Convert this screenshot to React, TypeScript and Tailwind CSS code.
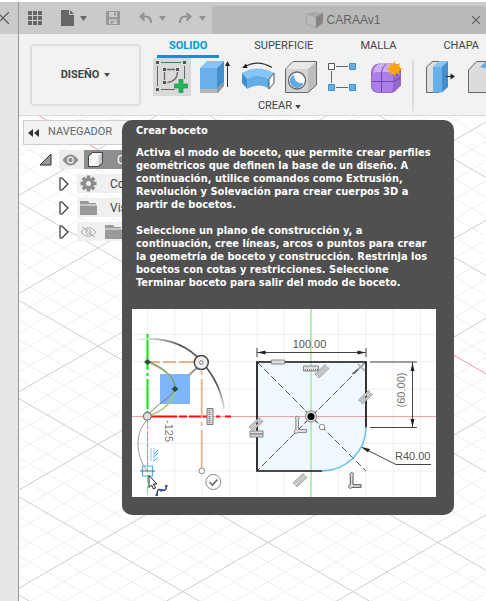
import React from 'react';
import { X } from 'lucide-react';

const SLOPE = 0.5776;
const STEP = 19.64;

const Caret: React.FC<{ className?: string }> = ({ className = '' }) => (
  <svg width="7" height="5" viewBox="0 0 7 5" className={className} fill="currentColor">
    <path d="M0 0h7L3.5 5z" />
  </svg>
);

/* Isometric floor grid, every fifth line is a major one */
const FloorGrid: React.FC = () => {
  const lines = Array.from({ length: 160 }, (_, i) => i - 80);
  const stroke = (k: number) => (k % 5 === 0 ? '#cdcdcd' : '#efefef');
  return (
    <svg className="absolute inset-0 w-full h-full" aria-hidden="true">
      {[false, true].map((major) =>
        lines
          .filter((k) => (k % 5 === 0) === major)
          .map((k) => (
            <g key={k}>
              <line x1="0" y1={380.9 + k * STEP} x2="2000" y2={380.9 + k * STEP + 2000 * SLOPE} stroke={k === -20 ? '#f49a9a' : stroke(k)} />
              <line x1="0" y1={472.1 + k * STEP} x2="2000" y2={472.1 + k * STEP - 2000 * SLOPE} stroke={stroke(k)} />
            </g>
          ))
      )}
    </svg>
  );
};

const SketchIcon = () => (
  <svg width="38" height="38" viewBox="0 0 38 38">
    <path d="M8 4.500h20M4.500 8v20M8 31.500h14M31.500 8v13" stroke="#666" fill="none" />
    <path d="M14 11.500h8M11.500 14v8M24.500 14c0 6-4 10-10 10.500" stroke="#666" strokeWidth="1.300" fill="none" />
    <path d="M3 3h3v3H3zM30 3h3v3h-3zM3 30h3v3H3zM10 10h3v3h-3zM23 10h3v3h-3zM10 23h3v3h-3z" fill="#555" />
    <path d="M26 21.500h4v4.500h4.500v4H30v4.500h-4V30h-4.500v-4H26z" fill="#22b455" stroke="#16994a" strokeWidth=".7" />
  </svg>
);

const ExtrudeIcon = () => (
  <svg width="38" height="38" viewBox="0 0 38 38">
    <path d="M4 31h17l7-7v4l-6 7H4z" fill="#999" />
    <path d="M4 31h17v4H4z" fill="#b5b5b5" />
    <path d="M4 10h17v21H4z" fill="#68b0e8" />
    <path d="M4 10l7-7h17l-7 7z" fill="#85c6fa" />
    <path d="M21 10l7-7v21l-7 7z" fill="#4490cc" />
    <path d="M31.500 29V6" stroke="#333" />
    <path d="M29 8l2.500-5L34 8z" fill="#222" />
  </svg>
);

const RevolveIcon = () => (
  <svg width="38" height="38" viewBox="0 0 38 38">
    <path d="M6 8.500C14 4 24 4 33 9.500" stroke="#333" strokeWidth="1.200" fill="none" />
    <path d="M3 10l4-4.500 1.500 4.500z" fill="#222" />
    <path d="M3 15c10-6 22-6 32 0l-5 6c-7-4-15-4-21.500 0z" fill="#85c6fa" />
    <path d="M8.500 21c6.500-4 14.500-4 21.500 0v10c-7-5-15-4-21.500 0z" fill="#62ade6" />
    <path d="M3 15l5.500 6v10L3 25z" fill="#3f8ecb" />
    <path d="M30 21l5-6v10l-5 6z" fill="#fff" stroke="#555" />
  </svg>
);

const HoleIcon = () => (
  <svg width="38" height="38" viewBox="0 0 38 38">
    <path d="M3.500 11L11 3.500h23.500L26 11z" fill="#e8e8e8" />
    <path d="M26 11l8.500-7.500V27L26 34.500z" fill="#bdbdbd" />
    <path d="M3.500 11H26v23.500H3.500z" fill="#d4d4d4" />
    <path d="M3.500 11L11 3.500h23.500V27L26 34.500H3.500z" fill="none" stroke="#666" />
    <circle cx="15" cy="22.500" r="8.500" fill="#fff" stroke="#666" strokeWidth="1.300" />
    <path d="M12 16.500c0 6 3 9 9.500 8.500A7 7 0 1 1 12 16.500z" fill="#5fabe5" />
  </svg>
);

const PatternIcon = () => (
  <svg width="38" height="38" viewBox="0 0 38 38">
    <path d="M11 8.500h12M6.500 13v12M11 29.500h12" stroke="#666" />
    <path d="M3.500 5.500h6v6h-6z" fill="#fff" stroke="#555" />
    <path d="M24.500 5.500h6v6h-6zM3.500 26.500h6v6h-6zM24.500 26.500h6v6h-6z" fill="#62b0ea" stroke="#4591cb" />
  </svg>
);

const FormIcon = () => (
  <svg width="38" height="38" viewBox="0 0 38 38">
    <path d="M10 5.500h16q6 1 7 7v15l-6 6q-2 1.500-5 1.500H10q-7-1-7-7V14q1-7 7-8.500z" fill="#9668ce" />
    <path d="M5 14q1-6 6-8h13q4 1 4 5l-3 5H5z" fill="#cbb0f2" />
    <path d="M4 19q0-5 5-5h11q5 0 5 5v10q0 5-5 5h-9q-7 0-7-6z" fill="#ab80e6" />
    <path d="M13.500 14v20M4 23.500h21q5-1 8-5M25 18q5-1 8-5M13.500 14q1-6 5-8" fill="none" stroke="#7148ad" />
    <path d="M26.500 3l1.700 4.200 4-2.200-1.500 4.300 4.300 1.700-4.300 1.700 1.500 4.300-4-2.200L26.500 19l-1.700-4.200-4 2.200 1.500-4.300L18 11l4.300-1.700L20.800 5l4 2.200z" fill="#ffa300" />
  </svg>
);

const PressPullIcon = () => (
  <svg width="38" height="38" viewBox="0 0 38 38">
    <path d="M5.500 9l6-5.500H18V34.500H5.500z" fill="#dedede" stroke="#666" />
    <path d="M12 8.500h9v26h-9z" fill="#68b0e8" />
    <path d="M12 8.500L18 3h9l-6 5.500z" fill="#85c6fa" />
    <path d="M21 8.500L27 3v26l-6 5.500z" fill="#4490cc" />
    <path d="M24.500 18.500H31" stroke="#333" />
    <path d="M29.500 15.500l4.500 3-4.500 3z" fill="#222" />
  </svg>
);

const FilletIcon = () => (
  <svg width="38" height="38" viewBox="0 0 38 38">
    <path d="M4.500 34.500V12l8-8.500h22V27l-8 7.500z" fill="#dcdcdc" stroke="#666" />
    <path d="M16 9l6-5.500h12.500V14z" fill="#62ade6" />
  </svg>
);

const Cube: React.FC = () => (
  <svg width="17" height="17" viewBox="0 0 17 17">
    <path d="M1.500 5l4-3.500h10v10.500l-4 3.500h-10z" fill="#f6f6f8" stroke="#444" />
    <path d="M11.500 5l4-3.500V12l-4 3.500z" fill="#c9ccd1" />
    <path d="M1.500 5l4-3.500h10v10.500l-4 3.500h-10z" fill="none" stroke="#444" />
  </svg>
);

const Folder = () => (
  <svg width="17" height="14" viewBox="0 0 17 14" fill="#9a9a9a" className="shrink-0">
    <path d="M0 0h8l1.500 2H16v1.500H0zM0 4.500h17V14H0z" />
  </svg>
);

const Gear = () => (
  <svg width="17" height="17" viewBox="-8.5 -8.5 17 17">
    {[0, 45, 90, 135].map((a) => (
      <rect key={a} x="-1.8" y="-8" width="3.6" height="16" fill="#8c8c8c" transform={`rotate(${a})`} />
    ))}
    <circle r="5.700" fill="#8c8c8c" />
    <circle r="2.500" fill="#efefef" />
  </svg>
);

const Eye: React.FC<{ hidden?: boolean }> = ({ hidden }) => (
  <svg width="17" height="12" viewBox="0 0 17 12" className="shrink-0">
    {hidden ? (
      <g fill="none" stroke="#aaa">
        <path d="M1 6q7.500-9 15 0q-7.500 9-15 0z" />
        <circle cx="8.500" cy="6" r="2.500" />
        <path d="M2 .5l13 11" />
      </g>
    ) : (
      <g>
        <path d="M.5 6q8-11 16 0q-8 11-16 0z" fill="#8f8f8f" />
        <circle cx="8.500" cy="6" r="3.500" fill="#ececec" />
        <circle cx="8.500" cy="6" r="2.200" fill="#8f8f8f" />
      </g>
    )}
  </svg>
);

const Expander = () => (
  <button aria-label="Expandir" className="w-[10px] shrink-0">
    <svg width="10" height="14" viewBox="0 0 10 14">
      <path d="M1 1h2l6 6-6 6H1z" fill="#fff" stroke="#333" strokeWidth="1.200" />
    </svg>
  </button>
);

const Parallel: React.FC<{ x: number; y: number }> = ({ x, y }) => (
  <g transform={`translate(${x} ${y})`} fill="#ccc" stroke="#888" strokeWidth=".7">
    <path d="M-7 3L3-6.500 4.500-5-5.500 4.500zM-4.500 5.500L5.500-4 7-2.500-3 7z" />
  </g>
);

const ANGLE = 'M-3-7a2 2 0 1 1 3 0V3H9V6H-1a2 2 0 1 1-2-3z';

/* Preview of the sketch command */
const SketchPreview: React.FC = () => (
  <svg viewBox="132 309 304 188" className="block w-full bg-white" role="img" aria-label="Boceto con cotas">
    <defs>
      <linearGradient id="fade" gradientUnits="userSpaceOnUse" x1="134" y1="339" x2="226" y2="410">
        <stop offset="0" stopColor="#666" stopOpacity="0" />
        <stop offset=".35" stopColor="#555" />
        <stop offset=".8" stopColor="#555" />
        <stop offset="1" stopColor="#888" stopOpacity=".2" />
      </linearGradient>
    </defs>
    <g stroke="#efefef">
      {[147.5, 175, 202, 229.5, 257, 284, 311, 338.5, 366, 393, 420.5].map((x) => (
        <line key={x} x1={x} x2={x} y1="309" y2="497" />
      ))}
      {[334.5, 361.5, 389, 416.5, 443.5, 471].map((y) => (
        <line key={y} x1="132" x2="436" y1={y} y2={y} />
      ))}
    </g>
    <path d="M256.500 362H366v65.500a44 44 0 0 1-44 43.500h-65.500z" fill="#eff8fe" />
    <path d="M132 416.500h304" stroke="#f0a0a0" />
    <path d="M311 309v188" stroke="#a5e8a5" strokeWidth="1.500" />

    {/* Arc and spline on the left */}
    <path d="M147.500 334v82" stroke="#0be80b" strokeWidth="2" strokeDasharray="4 2 30 3 3 3 30 2" />
    <path d="M147.500 420v77" stroke="#7be58f" strokeDasharray="8 3" />
    <path d="M147.500 420v46" stroke="#41b6d8" strokeDasharray="3 3" />
    <path d="M150 416.500h27m2 0h8m2 0h23m4 0h4m5 0h6" stroke="#f80d0d" strokeWidth="2" />
    <path d="M150 362h10m3 0h13m3 0h15M201.700 371v4m0 4v38m0 5v4m0 4v38" stroke="#e8b48c" strokeWidth="1.800" fill="none" />
    <path d="M134 340Q178 334 202 362Q221 384 224 409" fill="none" stroke="url(#fade)" strokeWidth="1.800" />
    <path d="M160 374h30v30h-30z" fill="#7db6fb" />
    <path d="M147.500 362c15 6 27 14 27.500 27 0 13-13 22-26 27" fill="none" stroke="#9ecb75" strokeWidth="1.500" />
    <path d="M147.500 361c17 7 27 16 27.500 27-1 9-20 16-27 28" fill="none" stroke="#777" />
    <path d="M189 375l9-8" stroke="#999" strokeWidth="2" />
    <circle cx="201.300" cy="362.500" r="7" fill="#f0f0f0" stroke="#444" strokeWidth="1.500" />
    <circle cx="201.300" cy="362.500" r="1.800" fill="#fff" stroke="#777" />
    <path d="M144 362l3.500-3 3.500 3-3.500 3zM171.500 389l3.500-3 3.500 3-3.500 3z" fill="#275034" />
    <path d="M147 420c-12 13-12 34 0 51" fill="none" stroke="#999" />
    <circle cx="147.300" cy="416.300" r="4" fill="#ddd" stroke="#666" />
    <path d="M142.500 466h10v10h-10z" fill="none" stroke="#42b7ee" strokeWidth="1.200" />
    <path d="M140 471h15" stroke="#666" />
    <path d="M151 448v13M154 448v13" stroke="#8ccbed" />
    <path d="M154 454l4-4m-4 7l4-4m-4 8l4-4" stroke="#42b7ee" />
    <text x="165" y="420" transform="rotate(90 165 420)" fontSize="11" fill="#777">-125</text>
    <path d="M207 408.500h6v16h-6z" fill="#ddd" stroke="#777" />
    <path d="M209.500 410v13" stroke="#777" strokeDasharray="1 1" strokeWidth="2" />
    <circle cx="201.700" cy="471" r="2.800" fill="#fff" stroke="#888" />
    <circle cx="213.300" cy="482" r="7.500" fill="#fff" stroke="#888" />
    <path d="M209.500 482l3 3 5-5.500" fill="none" stroke="#666" strokeWidth="1.600" />
    <path d="M149 475.500v12l2.500-2.500 2 4 2-1-2-4h3.500z" fill="#fff" stroke="#222" />
    <path d="M157 495c0-10 6-3 8-5 2-1 1-3 1-4" fill="none" stroke="#222" strokeWidth="1.300" />
    <path d="M155.500 494h2.500v2h-2.500zM160 489h2.500v2.500H160zM165 485h2.500v2H165z" fill="#2457c5" />

    {/* Dimensioned square */}
    <path d="M257 362l109 109M366 362L257 471" stroke="#555" strokeDasharray="7 3" />
    <path d="M366 427.500V362H257v109h65" fill="none" stroke="#111" strokeWidth="1.700" />
    <path d="M366 427.500a44 44 0 0 1-44 43.500" fill="none" stroke="#69bdec" strokeWidth="1.500" />
    <path d="M257 352.500h109M257 348v9M366 348v9M370 362h47M370 427.500h47M412.500 362v65M431 464.500h-35l-34-17" fill="none" stroke="#444" />
    <path d="M257.500 352.500l8-2v4zM365.500 352.500l-8-2v4zM412.500 363l-2 8h4zM412.500 427l-2-8h4zM361.500 447l8.500 2-2 3.500z" fill="#222" />
    <text x="309.500" y="348" textAnchor="middle" fontSize="11" fill="#555">100.00</text>
    <text x="405" y="390" textAnchor="middle" transform="rotate(-90 405 390)" fontSize="11" fill="#777">(60.00)</text>
    <text x="395" y="460" fontSize="11" fill="#555">R40.00</text>

    <g fill="#ddd" stroke="#888">
      <path d="M271.500 360h13v4h-13zM303.500 366h15v5h-15zM250 431h13v3h-13zM250 434h13v3h-13z" />
      <path d="M305 370h13" strokeDasharray="1 1" strokeWidth="2" />
      <path d={ANGLE} transform="translate(298.500 426.500) scale(.9 1)" />
    </g>
    <path d={ANGLE} transform="translate(353 482) scale(.9)" fill="#ddd" stroke="#444" />
    <Parallel x={322} y={371} />
    <Parallel x={256} y={424} />
    <Parallel x={300} y={480} />
    <Parallel x={365.5} y={397} />
    <path d="M352 374l10-8" stroke="#666" strokeWidth="1.500" />
    <path d="M358 364l7 7m-1-8l-6 7" stroke="#aaa" strokeWidth="1.500" />
    <circle cx="322" cy="427" r="2.800" fill="#fff" stroke="#888" />
    <circle cx="311" cy="416.500" r="5.500" fill="#ddd" stroke="#888" />
    <circle cx="311" cy="416.500" r="3.500" fill="#000" />
    <path d="M305 410.500l2 2m8 8l2 2m-12 0l2-2m8-8l2-2" stroke="#555" />
  </svg>
);

const createTools = [
  { name: 'Crear boceto', icon: <SketchIcon /> },
  { name: 'Extruir', icon: <ExtrudeIcon /> },
  { name: 'Revolución', icon: <RevolveIcon /> },
  { name: 'Agujero', icon: <HoleIcon /> },
  { name: 'Patrón', icon: <PatternIcon /> },
  { name: 'Crear forma', icon: <FormIcon /> },
];

const tabs = ['SOLIDO', 'SUPERFICIE', 'MALLA', 'CHAPA'];

const TitleBar: React.FC = () => (
  <header className="flex h-8 items-end bg-[#cacaca] text-[#666]">
    <div className="flex h-8 shrink-0 items-center pl-[9px] w-[193px]">
      <button aria-label="Panel de datos">
        <svg width="15" height="14" viewBox="0 0 15 14" fill="#666">
          {[0, 5, 10].map((y) => (
            <path key={y} d={`M0 ${y}h4v4h-4zM5 ${y}h4v4h-4zM10 ${y}h4v4h-4z`} />
          ))}
        </svg>
      </button>
      <button aria-label="Archivo" className="ml-[18px] flex items-center gap-[6px]">
        <svg width="13" height="16" viewBox="0 0 13 16" fill="#666">
          <path d="M0 0h8v5h5v11H0zM9 0l4 4H9z" />
        </svg>
        <Caret />
      </button>
      <button aria-label="Guardar" className="ml-[19px]">
        <svg width="14" height="14" viewBox="0 0 14 14" fill="#999">
          <path fillRule="evenodd" d="M0 0h14v14H0zM3 1v5h8V1zM3 8.500V13h8V8.500z" />
          <path d="M8 1.500h2v3H8zM4.500 10h5v1h-5zM5 10h1.500v3H5z" />
        </svg>
      </button>
      <button aria-label="Deshacer" className="ml-[19px] flex items-center gap-[7px] text-[#919191]">
        <svg width="13" height="12" viewBox="0 0 13 12" fill="none" stroke="currentColor" strokeWidth="2">
          <path d="M5.500 1L1.500 4.500l4 4M2 4.500h5c3 0 5 2 5 6.500" />
        </svg>
        <Caret />
      </button>
      <button aria-label="Rehacer" className="ml-[13px] flex items-center gap-[7px] text-[#919191]">
        <svg width="13" height="12" viewBox="0 0 13 12" fill="none" stroke="currentColor" strokeWidth="2">
          <path d="M7.500 1l4 3.500-4 4M11 4.500H6c-3 0-5 2-5 6.500" />
        </svg>
        <Caret />
      </button>
    </div>
    <div className="flex h-7 min-w-0 flex-1 items-center rounded-t bg-[#b9b9b9] pl-[5px] pr-[3px]">
      <div className="flex flex-1 items-center justify-center gap-1 font-['Liberation_Sans',sans-serif] text-xs">
        <svg width="17" height="16" viewBox="0 0 17 16">
          <path d="M0 2l6-2 11 1-7 4z" fill="#a9a9a9" />
          <path d="M0 2l10 3v11l-9-4z" fill="#bcbcbc" stroke="#999" strokeWidth=".7" />
          <path d="M10 5l7-4v10l-7 5z" fill="#858585" />
        </svg>
        CARAAv1
      </div>
      <button aria-label="Cerrar documento">
        <X size={14} />
      </button>
    </div>
  </header>
);

const Ribbon: React.FC = () => (
  <section className="flex overflow-hidden border-b border-[#dadada] bg-[#f2f2f2] text-[#444]">
    <button className="ml-[11px] mt-[10px] flex h-[62px] w-[111px] shrink-0 items-center justify-center gap-[5px] rounded border-2 border-[#dedede] font-bold">
      DISEÑO
      <Caret className="h-1 w-[6px]" />
    </button>
    <div className="ml-[12px] flex shrink-0 flex-col">
      <nav className="ml-1 flex h-6 gap-[23px]">
        {tabs.map((tab, i) => (
          <button
            key={tab}
            className={`h-6 border-b-3 px-3 pt-1 ${i === 0 ? 'border-[#0696d7] font-bold text-[#0696d7]' : 'border-transparent'}`}
          >
            {tab}
          </button>
        ))}
      </nav>
      <div className="flex">
        <div className="flex flex-col items-center">
          <div className="flex gap-[5px]">
            {createTools.map((tool, i) => (
              <button key={tool.name} aria-label={tool.name} className={i === 0 ? 'bg-[#d9d9d9]' : ''}>
                {tool.icon}
              </button>
            ))}
          </div>
          <button className="flex h-[19px] items-center gap-[3px] pt-[2px]">
            CREAR
            <Caret className="h-1 w-[6px]" />
          </button>
        </div>
        <div className="ml-[6px] mr-[7px] mt-[2px] h-[51px] w-[2px] bg-[#dedede]" />
        <div className="flex h-[38px] gap-[5px]">
          <button aria-label="Pulsar/tirar"><PressPullIcon /></button>
          <button aria-label="Empalme"><FilletIcon /></button>
        </div>
      </div>
    </div>
  </section>
);

const Browser: React.FC = () => (
  <aside className="relative ml-1 mt-1 w-[106px] text-xs text-[#444]">
    <div className="flex h-[25px] items-center gap-[9px] border border-[#cfcfcf] bg-[#f3f3f3] pl-1 text-[11px] text-[#666]">
      <svg width="11" height="8" viewBox="0 0 11 8" fill="#333">
        <path d="M5 0v8L0 4zM11 0v8L6 4z" />
      </svg>
      NAVEGADOR
    </div>
    <ul className="mt-[5px] flex flex-col gap-[5px]">
      <li className="flex h-[19px] items-center pl-4">
        <button aria-label="Contraer" className="w-[20px] shrink-0">
          <svg width="13" height="13" viewBox="0 0 13 13">
            <path d="M12 1v11H1z" fill="#999" stroke="#333" />
          </svg>
        </button>
        <div className="flex h-[19px] w-[25px] shrink-0 items-center bg-[#ececec] pl-[3px]"><Eye /></div>
        <div className="flex h-[19px] flex-1 items-center gap-[13px] bg-[#8e8e8e] pl-[3px] text-white"><Cube /> C</div>
      </li>
      <li className="flex h-[19px] items-center gap-2 pl-[36px]">
        <Expander />
        <div className="flex h-[19px] flex-1 items-center gap-[13px] bg-[#f0f0f0] pl-[3px]"><Gear /> Co</div>
      </li>
      <li className="flex h-[19px] items-center gap-2 pl-[36px]">
        <Expander />
        <div className="flex h-[19px] flex-1 items-center gap-[13px] bg-[#f0f0f0] pl-[3px]"><Folder /> Vis</div>
      </li>
      <li className="flex h-[19px] items-center gap-2 pl-[36px]">
        <Expander />
        <div className="flex h-[19px] flex-1 items-center gap-2 bg-[#f0f0f0] pl-[3px]"><Eye hidden /><Folder /></div>
      </li>
    </ul>
  </aside>
);

export default function App() {
  return (
    <div className="flex min-h-screen bg-white pt-[2px] font-[Roboto,'Liberation_Sans',sans-serif] text-[11px]">
      <div className="w-[19px] shrink-0 border-r border-[#999] bg-[#e6e6e6]">
        <div className="flex h-8 items-center justify-end overflow-hidden bg-[#cacaca] pr-1">
          <button aria-label="Cerrar panel" className="shrink-0">
            <X size={22} strokeWidth={1.2} color="#555" />
          </button>
        </div>
      </div>
      <main className="flex min-w-0 flex-1 flex-col">
        <TitleBar />
        <Ribbon />
        <div className="relative flex-1 overflow-hidden">
          <FloorGrid />
          <Browser />
          <div
            role="tooltip"
            className="absolute left-[103px] top-1 w-[332px] rounded-[10px] bg-[#505050] pb-[18px] pl-[10px] pr-[18px] pt-1 text-white"
          >
            <div className="pl-1 whitespace-nowrap font-['DejaVu_Sans_Condensed','DejaVu_Sans',sans-serif] text-[11px] font-bold leading-[13px]">
              <h2>Crear boceto</h2>
              <p className="mt-[9px]">
                Activa el modo de boceto, que permite crear perfiles<br />
                geométricos que definen la base de un diseño. A<br />
                continuación, utilice comandos como Extrusión,<br />
                Revolución y Solevación para crear cuerpos 3D a<br />
                partir de bocetos.
              </p>
              <p className="mt-[13px]">
                Seleccione un plano de construcción y, a<br />
                continuación, cree líneas, arcos o puntos para crear<br />
                la geometría de boceto y construcción. Restrinja los<br />
                bocetos con cotas y restricciones. Seleccione<br />
                Terminar boceto para salir del modo de boceto.
              </p>
            </div>
            <div className="mt-5 font-['Liberation_Sans',sans-serif]">
              <SketchPreview />
            </div>
          </div>
        </div>
      </main>
    </div>
  );
}
